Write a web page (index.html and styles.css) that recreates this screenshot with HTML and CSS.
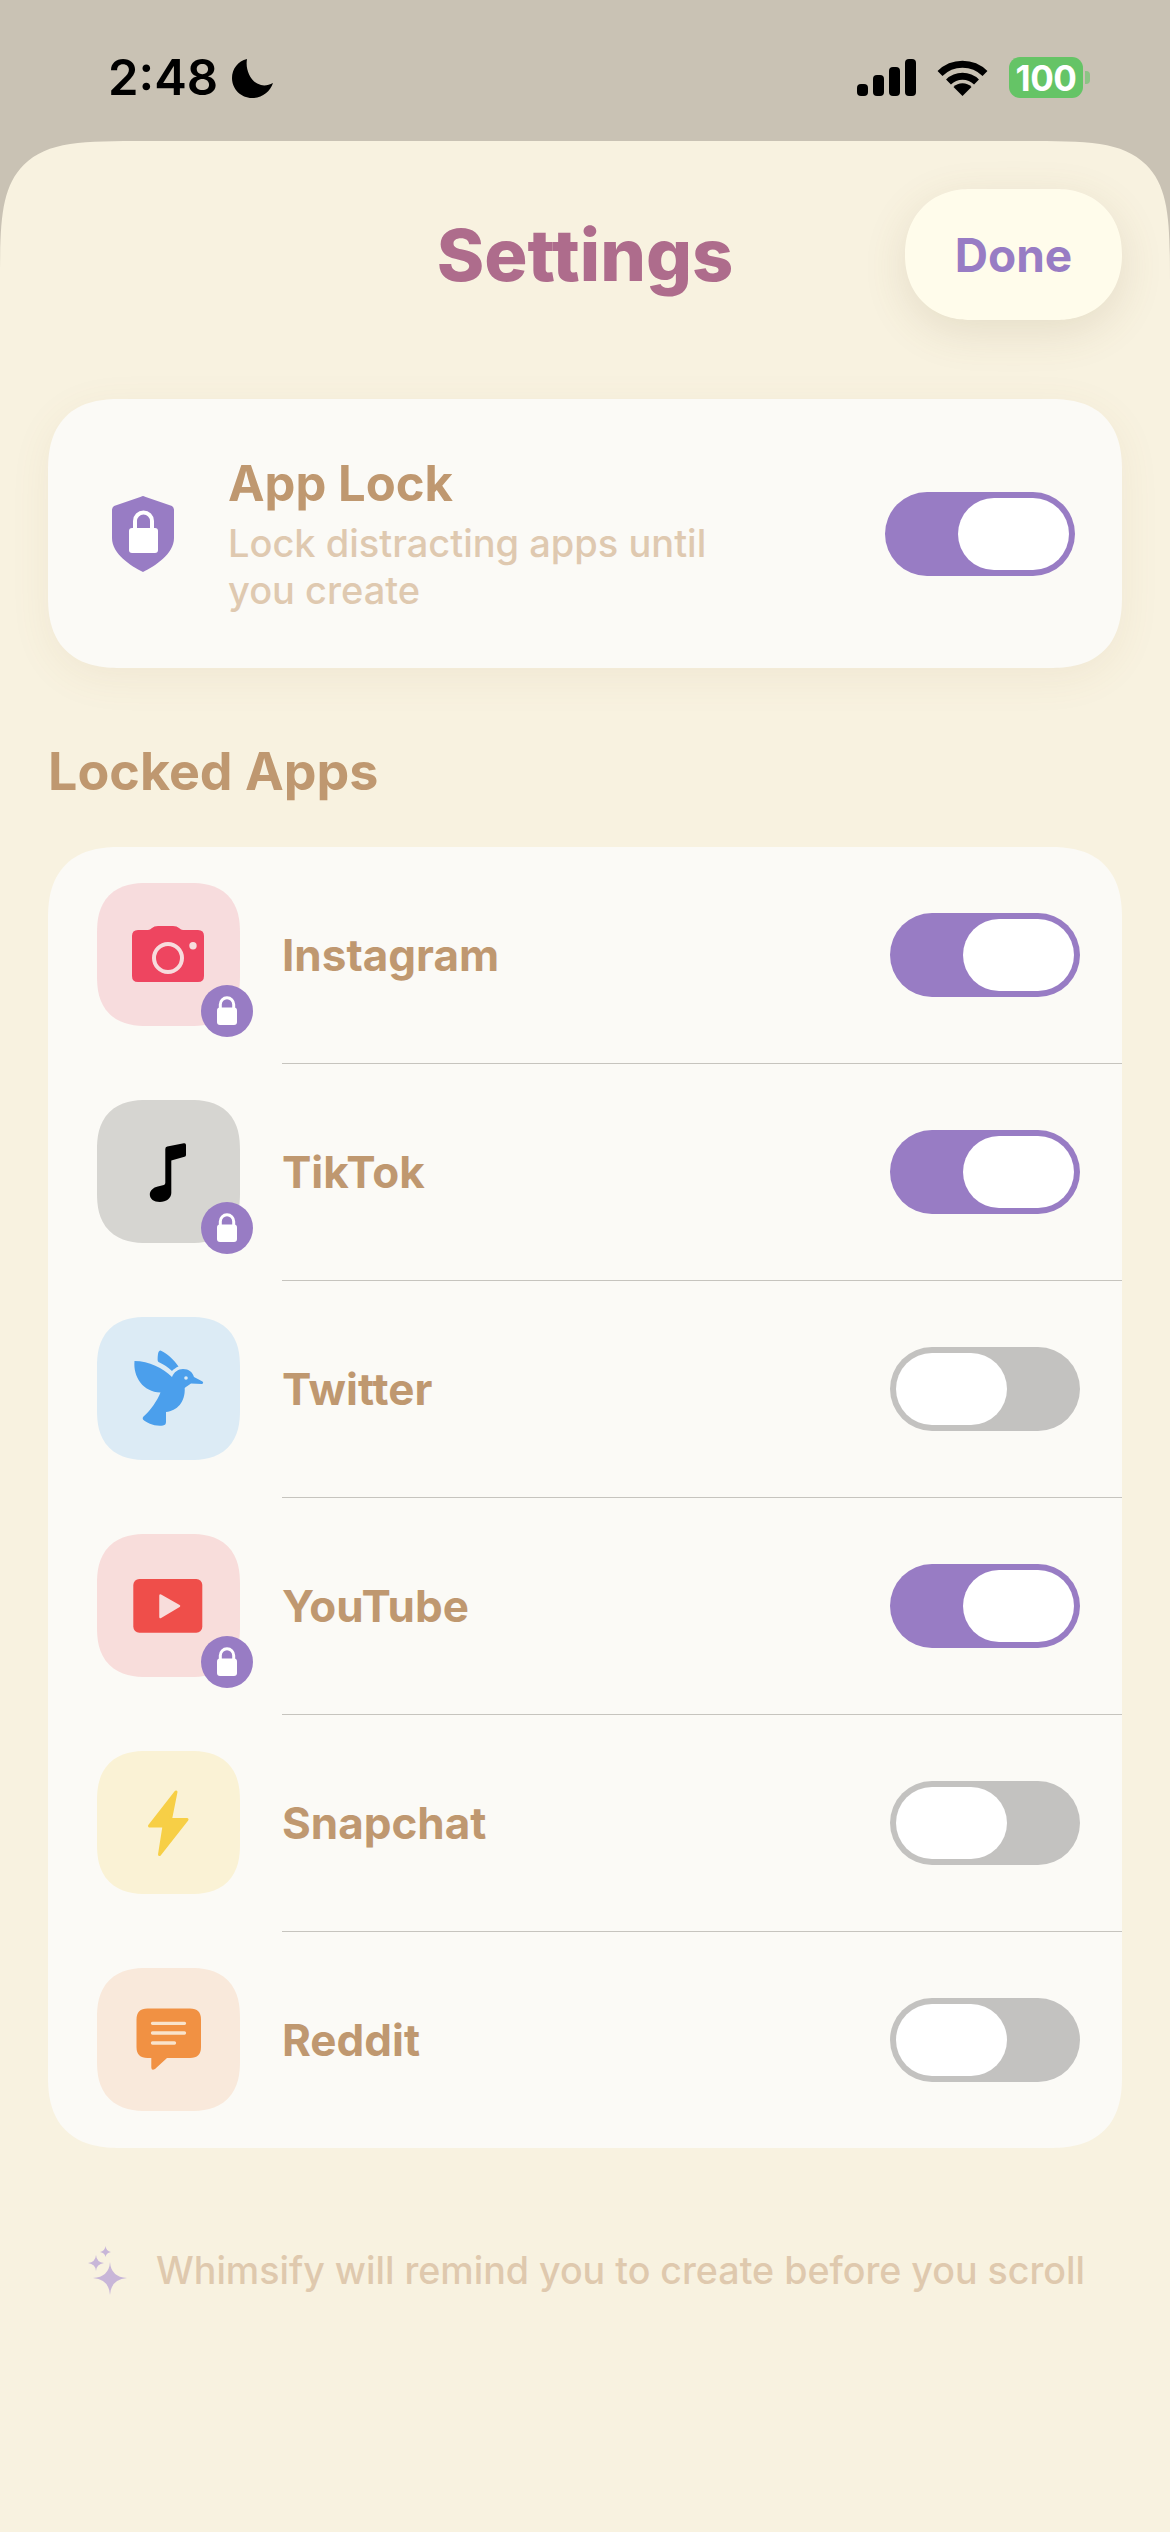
FILE: index.html
```html
<!DOCTYPE html>
<html lang="en">
  <head>
    <meta charset="UTF-8" />
    <meta name="viewport" content="width=device-width, initial-scale=1.0" />
    <title>Settings</title>
    <link rel="stylesheet" href="styles.css">
  </head>
  <body>
    <div class="status-bar">
      <div class="status-left">
        <span class="clock">2:48</span>
        <svg class="moon" viewBox="0 0 41 40"><path d="M15 1C6 3 0 11 0 20c0 11 9 20 20 20 10 0 18-6 21-15-4 2-8 3-12 2C19 25 13 12 15 1z"/></svg>
      </div>
      <div class="status-right">
        <svg class="signal" viewBox="0 0 59 37">
          <rect x="0" y="25" width="11" height="12" rx="4"/>
          <rect x="16" y="16" width="11" height="21" rx="4"/>
          <rect x="32" y="8" width="11" height="29" rx="4"/>
          <rect x="48" y="0" width="11" height="37" rx="4"/>
        </svg>
        <svg class="wifi" viewBox="0 0 51 37">
          <path class="wifi-arc" d="M3 14.500a32 32 0 0 1 45 0"/>
          <path class="wifi-arc" d="M11.500 23a20 20 0 0 1 28 0"/>
          <path d="M25.500 37l-9-9a12.700 12.700 0 0 1 18 0z"/>
        </svg>
        <div class="battery">
          <span class="battery-level">100</span>
          <span class="battery-nub"></span>
        </div>
      </div>
    </div>

    <div class="sheet">
      <div class="header">
        <h1 class="title">Settings</h1>
        <button class="done">Done</button>
      </div>

      <div class="card lock-card">
        <svg class="shield" viewBox="0 0 62 76">
          <path d="M29 .7q2-1.400 4 0L60 10q2 1.500 2 4v28C62 58 43 70 31 76 19 70 0 58 0 42V14q0-2.500 2-4z" fill="#987cc4"/>
          <path d="M23 33v-8a8.500 8.500 0 0 1 17 0v8" fill="none" stroke="#fff" stroke-width="4"/>
          <rect x="17" y="32" width="29" height="25" rx="3" fill="#fff"/>
        </svg>
        <div class="lock-text">
          <div class="lock-title">App Lock</div>
          <div class="lock-sub">Lock distracting apps until you create</div>
        </div>
        <div class="toggle on"><span class="knob"></span></div>
      </div>

      <h2 class="section-title">Locked Apps</h2>

      <div class="card app-list">
        <div class="app-row">
          <div class="tile tile-instagram">
            <svg class="tile-icon" viewBox="0 0 143 143">
              <path d="M41 47h10q2 0 4-2 2-2 6-2h15q4 0 6 2 2 2 4 2h15q6 0 6 6v40q0 6-6 6H41q-6 0-6-6V53q0-6 6-6z" fill="#ee4560"/>
              <circle cx="71" cy="75" r="14" fill="none" stroke="#f7dcdd" stroke-width="4"/>
              <circle cx="96" cy="62.700" r="3.700" fill="#f7dcdd"/>
            </svg>
            <span class="badge">
              <svg viewBox="0 0 52 52"><path d="M19.300 25v-5.500a6.700 6.700 0 0 1 13.400 0V25" fill="none" stroke="#fff" stroke-width="3"/><rect x="16" y="22.500" width="20" height="17.500" rx="3" fill="#fff"/></svg>
            </span>
          </div>
          <span class="app-name">Instagram</span>
          <div class="toggle on"><span class="knob"></span></div>
        </div>

        <div class="app-row">
          <div class="tile tile-tiktok">
            <svg class="tile-icon" viewBox="0 0 143 143">
              <path d="M68.300 49q0-2 2-2.400l16.500-3.400q2.200-.4 2.200 1.800V55q0 1.500-1.500 1.800L74.300 60.500V93c0 5-5 9-11.500 9-6 0-10-3-10-7.500 0-4 3.500-7 8-8l6-1.500q1.500-.5 1.500-2z"/>
            </svg>
            <span class="badge">
              <svg viewBox="0 0 52 52"><path d="M19.300 25v-5.500a6.700 6.700 0 0 1 13.400 0V25" fill="none" stroke="#fff" stroke-width="3"/><rect x="16" y="22.500" width="20" height="17.500" rx="3" fill="#fff"/></svg>
            </span>
          </div>
          <span class="app-name">TikTok</span>
          <div class="toggle on"><span class="knob"></span></div>
        </div>

        <div class="app-row">
          <div class="tile tile-twitter">
            <svg class="tile-icon" viewBox="0 0 143 143">
              <path fill="#4b9fec" d="M37.500 44C52 44 66 51 75 60c2-5 6-8 11-8 6 0 9.500 3 11 8l8.500 4.500q1.500 1.500-.5 2.500l-11-.5c-3 2.500-5.500 3.500-6.300 4.500C88.500 85 80 94 69 95v10q0 3-3 3.500c-9 1-16-2.500-20-6q-1-1.500.5-3C54 93 60 84 63.500 75.500 46 75 36 60 37.500 44z"/>
              <path fill="#4b9fec" d="M63.500 33.500c6.500 2.500 13.500 9.500 18 16-2.500 1-4.500 2.500-6.500 4.500-4-4-9-7-13.500-9q-1.500-1-.5-8 .5-3.500 2.500-3.500z"/>
              <circle cx="89" cy="61" r="1.800" fill="#dcebf5"/>
            </svg>
          </div>
          <span class="app-name">Twitter</span>
          <div class="toggle"><span class="knob"></span></div>
        </div>

        <div class="app-row">
          <div class="tile tile-youtube">
            <svg class="tile-icon" viewBox="0 0 143 143">
              <rect x="36.300" y="45" width="69" height="53.700" rx="6" fill="#ef4e4a"/>
              <path d="M63.500 61.500L82 72 63.500 83z" fill="#f8dddb" stroke="#f8dddb" stroke-width="2.500" stroke-linejoin="round"/>
            </svg>
            <span class="badge">
              <svg viewBox="0 0 52 52"><path d="M19.300 25v-5.500a6.700 6.700 0 0 1 13.400 0V25" fill="none" stroke="#fff" stroke-width="3"/><rect x="16" y="22.500" width="20" height="17.500" rx="3" fill="#fff"/></svg>
            </span>
          </div>
          <span class="app-name">YouTube</span>
          <div class="toggle on"><span class="knob"></span></div>
        </div>

        <div class="app-row">
          <div class="tile tile-snapchat">
            <svg class="tile-icon" viewBox="0 0 143 143">
              <path d="M79 41L52.500 75H67L62.500 103.500 90 68.500H73.500z" fill="#f7cf46" stroke="#f7cf46" stroke-width="3" stroke-linejoin="round"/>
            </svg>
          </div>
          <span class="app-name">Snapchat</span>
          <div class="toggle"><span class="knob"></span></div>
        </div>

        <div class="app-row">
          <div class="tile tile-reddit">
            <svg class="tile-icon" viewBox="0 0 143 143">
              <path d="M50.500 40.500h42.500q11 0 11 11V79q0 11-11 11H70L58 101q-3.500 2-3.700-1.500V90H50.500q-11 0-11-11V51.500q0-11 11-11z" fill="#f19143"/>
              <path d="M55.500 55.300h32M55.500 65h32M55.500 75h22" stroke="#f9e3cc" stroke-width="3.300" stroke-linecap="round"/>
            </svg>
          </div>
          <span class="app-name">Reddit</span>
          <div class="toggle"><span class="knob"></span></div>
        </div>
      </div>

      <div class="footer-note">
        <svg class="sparkles" viewBox="0 0 44 50">
          <path d="M25 17Q26 32 42 33 26 34 25 50 24 34 8 33 24 32 25 17z"/>
          <path d="M11 10Q11.500 17 19 18 11.500 19 11 26 10.500 19 3 18 10.500 17 11 10z"/>
          <path d="M20.500 1Q21 6 26 7 21 8 20.500 12 20 8 15 7 20 6 20.500 1z"/>
        </svg>
        <span>Whimsify will remind you to create before you scroll</span>
      </div>
    </div>
  </body>
</html>
```

FILE: styles.css
```css
body {
  margin: 0;
  height: 2532px;
  display: flex;
  flex-direction: column;
  overflow: hidden;
  font-family: Inter, "Liberation Sans", sans-serif;
  background-color: #c9c2b4;
}

.status-bar {
  height: 141px;
  flex-shrink: 0;
  box-sizing: border-box;
  padding: 57px 87px 0 108px;
  display: flex;
  justify-content: space-between;
  align-items: flex-start;
}

.status-left {
  display: flex;
  align-items: center;
  gap: 14px;
}

.clock {
  font-size: 49px;
  font-weight: 600;
  line-height: 41px;
  color: #000;
}

.moon {
  width: 41px;
  height: 40px;
}

.status-right {
  display: flex;
  align-items: center;
  gap: 21px;
}

.signal {
  width: 59px;
  height: 37px;
}

.wifi {
  width: 51px;
  height: 37px;
}

.wifi-arc {
  fill: none;
  stroke: #000;
  stroke-width: 7;
}

.battery {
  width: 74px;
  height: 41px;
  background-color: #65c466;
  border-radius: 11px;
  display: flex;
  align-items: center;
  justify-content: center;
  position: relative;
}

.battery-level {
  font-size: 35px;
  font-weight: 700;
  letter-spacing: -0.5px;
  color: #fff;
}

.battery-nub {
  position: absolute;
  right: -7px;
  top: 14px;
  width: 5px;
  height: 13px;
  border-radius: 0 4px 4px 0;
  background-color: #65c466;
  opacity: 0.6;
}

.sheet {
  flex: 1;
  box-sizing: border-box;
  padding: 48px 48px 0;
  background-color: #f8f2e0;
  border-radius: 150px 150px 0 0;
  corner-shape: squircle;
}

.header {
  display: grid;
  grid-template-columns: 1fr auto 1fr;
  align-items: center;
  height: 131px;
}

.title {
  grid-column: 2;
  margin: 0;
  font-size: 72px;
  font-weight: 800;
  color: #ae6c8c;
}

.done {
  grid-column: 3;
  justify-self: end;
  width: 217px;
  height: 131px;
  border: none;
  border-radius: 65px;
  corner-shape: superellipse(1.1);
  background-color: #fffceb;
  color: #987cc4;
  font-family: inherit;
  font-size: 46px;
  font-weight: 700;
  box-shadow: 0 12px 44px rgba(120, 100, 60, 0.14);
}

.card {
  background-color: #fbfaf6;
  border-radius: 72px;
  corner-shape: superellipse(1.3);
}

.lock-card {
  height: 269px;
  margin-top: 79px;
  box-sizing: border-box;
  padding: 0 47px 0 64px;
  display: flex;
  align-items: center;
  box-shadow: 0 10px 40px rgba(150, 110, 60, 0.08);
}

.shield {
  width: 62px;
  height: 76px;
  margin-right: 54px;
  flex-shrink: 0;
}

.lock-text {
  flex: 1;
}

.lock-title {
  font-size: 49px;
  font-weight: 700;
  line-height: 60px;
  color: #bf9870;
}

.lock-sub {
  max-width: 540px;
  margin-top: 6px;
  font-size: 38px;
  font-weight: 450;
  line-height: 47px;
  color: #dfc9b0;
}

.toggle {
  width: 190px;
  height: 84px;
  flex-shrink: 0;
  box-sizing: border-box;
  padding: 6px;
  border-radius: 42px;
  background-color: #c3c2c0;
  display: flex;
}

.toggle.on {
  background-color: #987cc4;
  justify-content: flex-end;
}

.knob {
  width: 111px;
  height: 72px;
  border-radius: 36px;
  background-color: #fff;
}

.section-title {
  margin: 74px 0 45px;
  font-size: 52px;
  font-weight: 700;
  line-height: 60px;
  color: #bf9870;
}

.app-list {
  padding-left: 49px;
}

.app-row {
  height: 216px;
  display: flex;
  align-items: center;
  padding-right: 42px;
  position: relative;
}

/* divider starts at the name, not under the tile */
.app-row:not(:last-child)::after {
  content: "";
  position: absolute;
  left: 185px;
  right: 0;
  bottom: -1px;
  height: 1px;
  background-color: #c6c4be;
}

.app-row + .app-row {
  margin-top: 1px;
}

.tile {
  width: 143px;
  height: 143px;
  margin-bottom: 1px;
  flex-shrink: 0;
  border-radius: 50px;
  corner-shape: superellipse(1.3);
  position: relative;
}

.tile-icon {
  display: block;
  width: 143px;
  height: 143px;
}

.tile-instagram { background-color: #f7dcdd; }
.tile-tiktok { background-color: #d6d5d1; }
.tile-twitter { background-color: #dcebf5; }
.tile-youtube { background-color: #f8dddb; }
.tile-snapchat { background-color: #faf2d5; }
.tile-reddit { background-color: #f9e9db; }

.badge {
  position: absolute;
  right: -13px;
  bottom: -11px;
  width: 52px;
  height: 52px;
  border-radius: 50%;
  background-color: #987cc4;
}

.badge svg {
  display: block;
}

.app-name {
  flex: 1;
  margin-left: 42px;
  font-size: 44px;
  font-weight: 700;
  color: #bf9870;
}

.footer-note {
  margin-top: 97px;
  display: flex;
  justify-content: center;
  align-items: center;
  gap: 27px;
  font-size: 37.600px;
  font-weight: 500;
  color: #dfc9ae;
}

.sparkles {
  width: 44px;
  height: 50px;
  fill: #c8b6d8;
}
```
